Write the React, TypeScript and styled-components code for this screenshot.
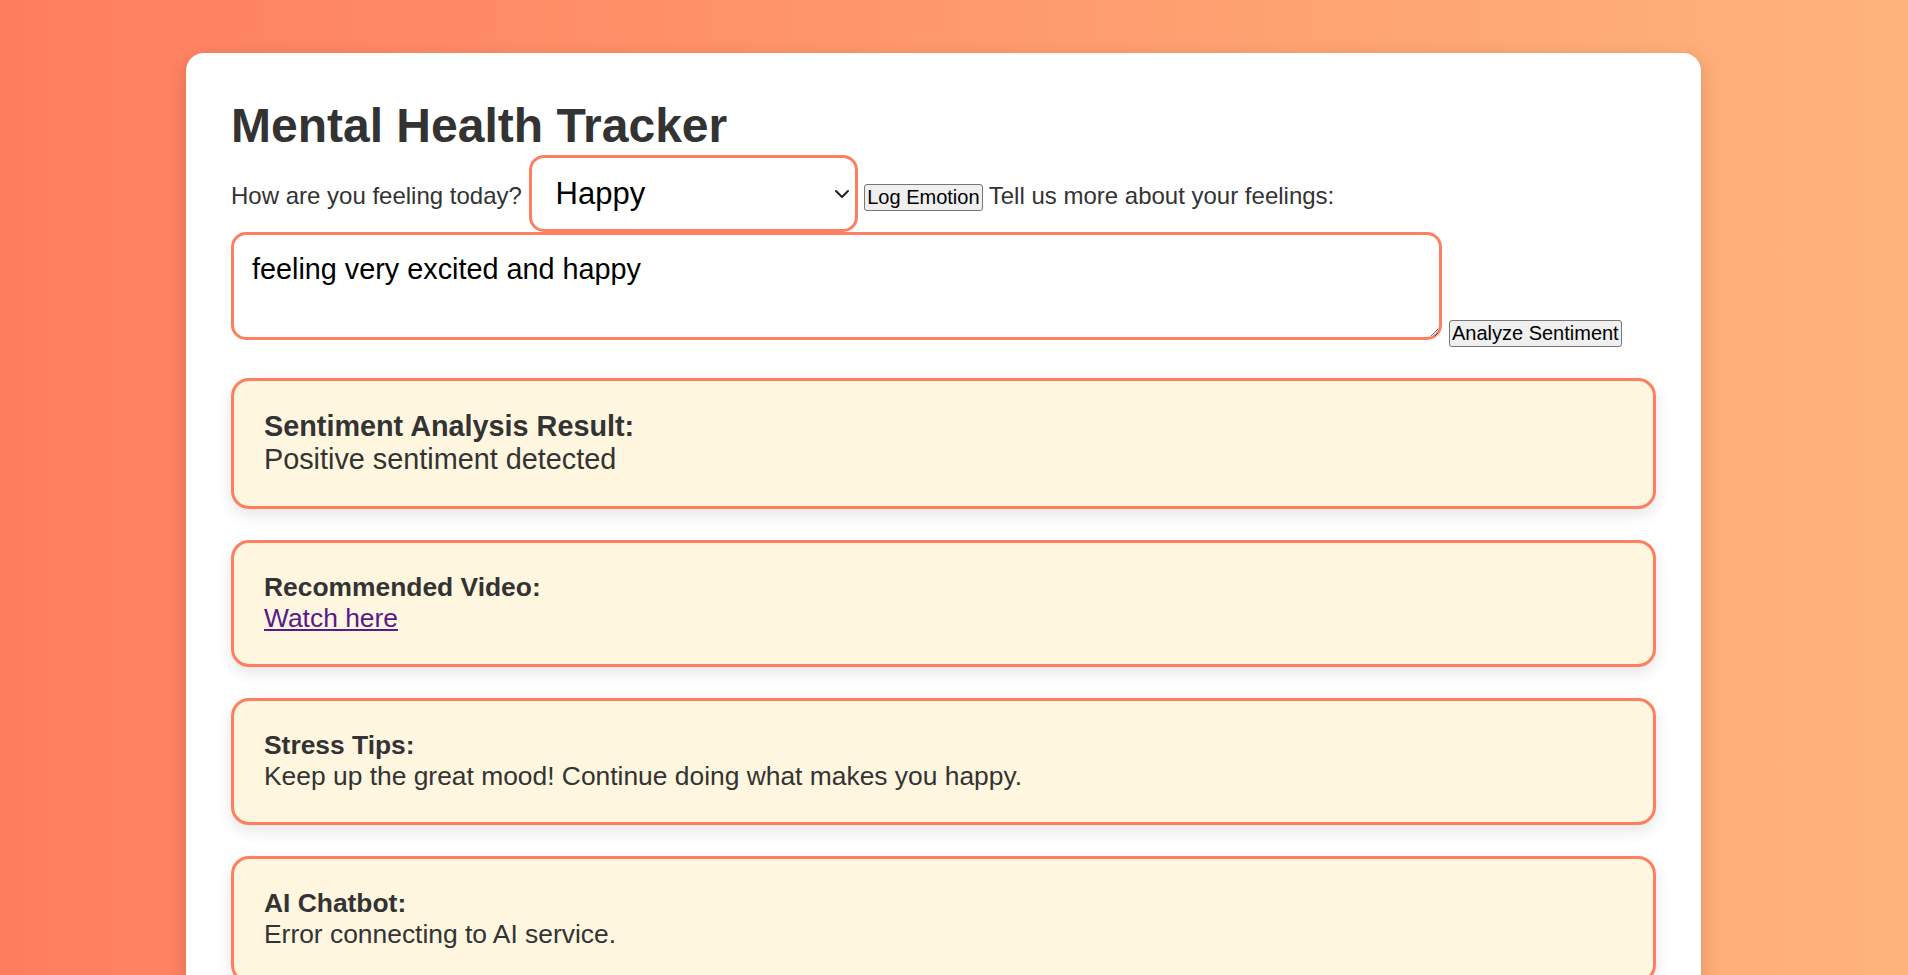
import { FC } from 'react';
import styled, { createGlobalStyle } from 'styled-components';
import { ChevronDown } from 'lucide-react';

const GlobalStyle = createGlobalStyle`
  html, body {
    margin: 0;
    padding: 0;
  }
  body {
    font-family: "Liberation Sans", Arial, sans-serif;
    background: linear-gradient(to right, #ff7e5f, #feb47b);
    min-height: 100vh;
  }
`;

const App: FC = () => {
  return (
    <Page>
      <GlobalStyle />
      <Container>
        <Title>Mental Health Tracker</Title>
        <Form>
          <Label>How are you feeling today?</Label>{' '}
          <SelectWrap>
            <Select defaultValue="Happy">
              <option>Happy</option>
              <option>Sad</option>
              <option>Anxious</option>
              <option>Stressed</option>
              <option>Angry</option>
              <option>Calm</option>
            </Select>
            <Arrow>
              <ChevronDown size={24} strokeWidth={2} />
            </Arrow>
          </SelectWrap>{' '}
          <Button>Log Emotion</Button>{' '}
          <Label>Tell us more about your feelings:</Label>{' '}
          <TextArea defaultValue="feeling very excited and happy" />{' '}
          <Button>Analyze Sentiment</Button>
        </Form>

        <Card>
          <Heading big>Sentiment Analysis Result:</Heading>
          <Body big>Positive sentiment detected</Body>
        </Card>
        <Card>
          <Heading>Recommended Video:</Heading>
          <Body>
            <Link href="#">Watch here</Link>
          </Body>
        </Card>
        <Card>
          <Heading>Stress Tips:</Heading>
          <Body>Keep up the great mood! Continue doing what makes you happy.</Body>
        </Card>
        <Card>
          <Heading>AI Chatbot:</Heading>
          <Body>Error connecting to AI service.</Body>
        </Card>
      </Container>
    </Page>
  );
};

export default App;

// the reference was taken with a 15px scrollbar on the right
const Page = styled.div`
  padding: 53px 21px 53px 0;
`;

const Container = styled.div`
  width: 1515px;
  margin: 0 auto;
  padding: 45px;
  box-sizing: border-box;
  background: #fff;
  border-radius: 18px;
  box-shadow: 0 6px 20px rgba(0, 0, 0, 0.15);
  color: #333;
`;

const Title = styled.h1`
  font-size: 48px;
  font-weight: bold;
  margin: 0 0 2px;
  color: #333;
`;

const Form = styled.div`
  font-size: 24px;
`;

const Label = styled.label`
  font-size: 24px;
  color: #333;
`;

const SelectWrap = styled.span`
  position: relative;
  display: inline-block;
`;

const Select = styled.select`
  appearance: none;
  font-family: "Liberation Sans", Arial, sans-serif;
  font-size: 31px;
  width: 329px;
  height: 77px;
  padding: 0 40px 0 24px;
  border: 3px solid #ff7e5f;
  border-radius: 15px;
  background: #fff;
  color: #000;
  outline: none;
`;

const Arrow = styled.span`
  position: absolute;
  right: 4px;
  top: 50%;
  transform: translateY(-50%);
  display: flex;
  color: #222;
  pointer-events: none;
`;

const Button = styled.button`
  font-family: "Liberation Sans", Arial, sans-serif;
  font-size: 20px;
  padding: 1px 2px;
  border: 1px solid #767676;
  border-radius: 3px;
  background: #efefef;
  color: #000;
`;

const TextArea = styled.textarea`
  font-family: "Liberation Sans", Arial, sans-serif;
  font-size: 28.8px;
  width: 85%;
  height: 108px;
  box-sizing: border-box;
  padding: 18px 18px 14px;
  border: 3px solid #ff7e5f;
  border-radius: 15px;
  color: #000;
  vertical-align: baseline;
  outline: none;
`;

const Card = styled.div`
  margin-top: 31px;
  padding: 29px 30px 30px;
  background: #fef6df;
  border: 3px solid #ff7e5f;
  border-radius: 18px;
  box-shadow: 0 6px 15px rgba(0, 0, 0, 0.1);

  & + & {
    margin-top: 31px;
  }
`;

const Heading = styled.div<{ big?: boolean }>`
  font-size: ${(p) => (p.big ? '28.8px' : '26.4px')};
  font-weight: bold;
  color: #333;
`;

const Body = styled.div<{ big?: boolean }>`
  font-size: ${(p) => (p.big ? '28.8px' : '26.4px')};
  color: #333;
`;

const Link = styled.a`
  color: #551a8b;
  text-decoration: underline;
`;
